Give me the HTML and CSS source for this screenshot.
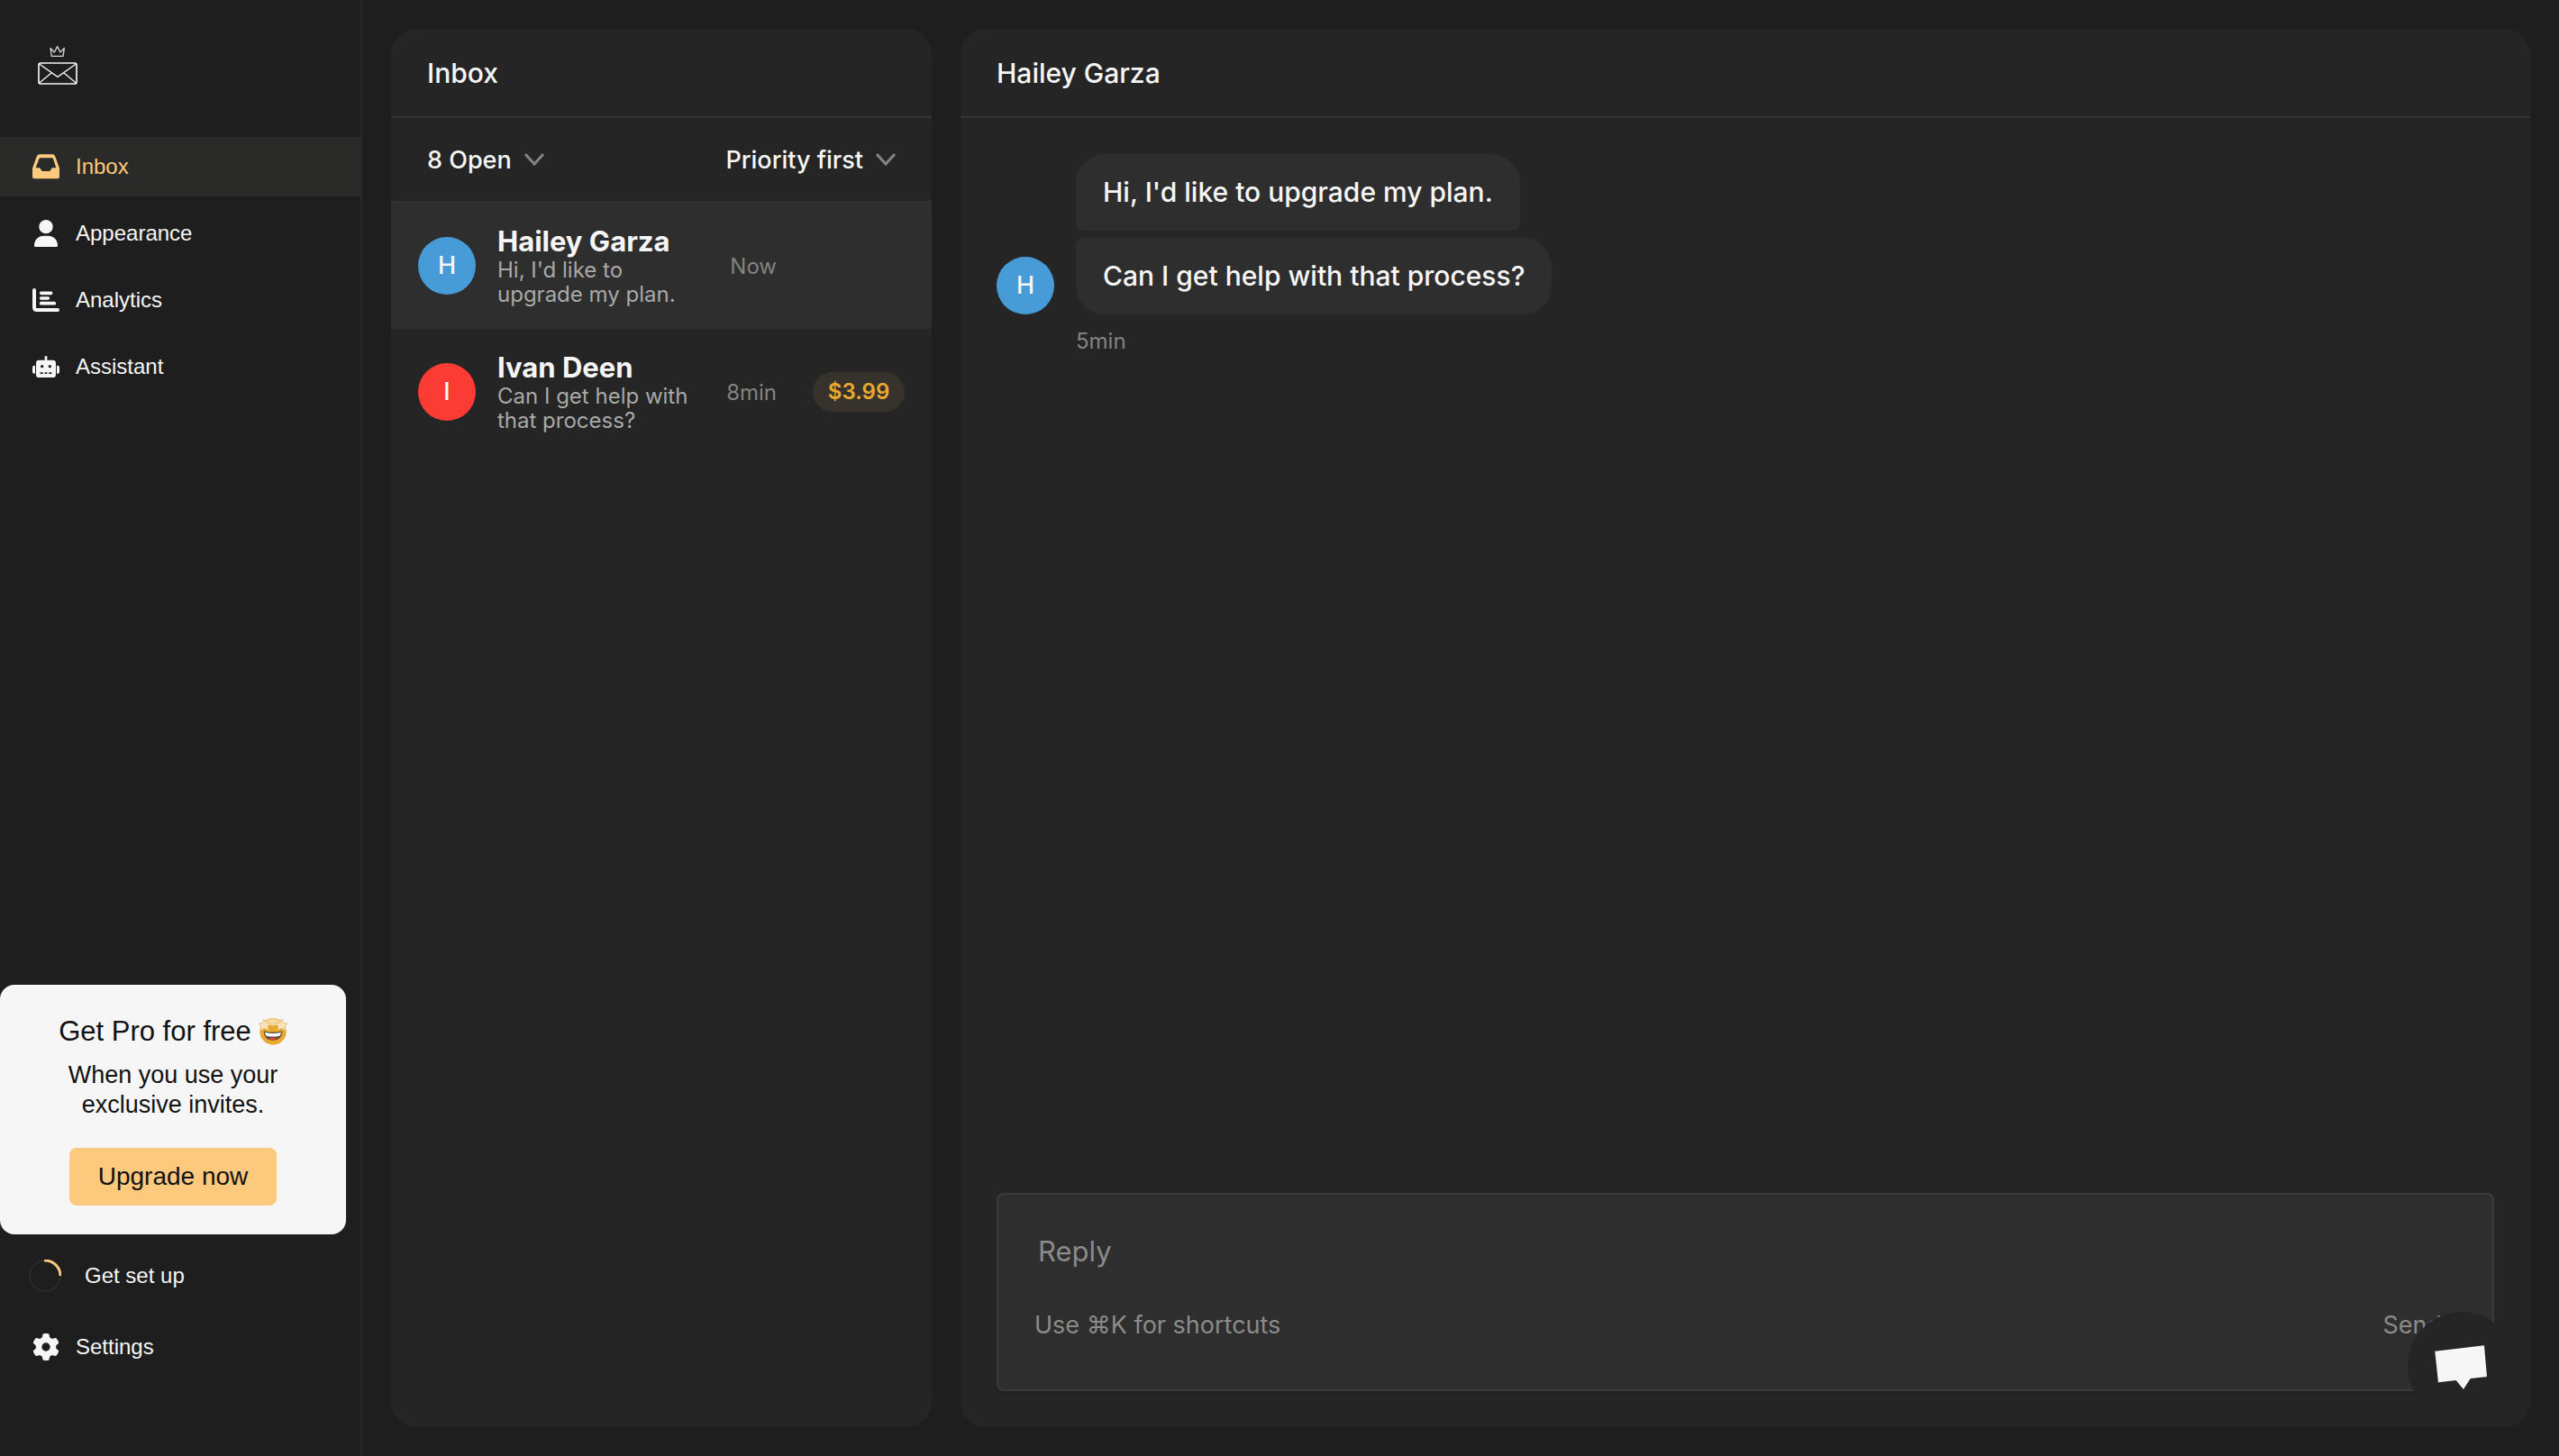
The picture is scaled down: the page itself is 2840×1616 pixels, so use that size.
FILE: index.html
```html
<!DOCTYPE html>
<html lang="en">
<head>
<meta charset="utf-8">
<title>Inbox</title>
<meta name="viewport" content="width=device-width, initial-scale=1">
<link rel="stylesheet" href="styles.css">
</head>
<body>
<div class="app">
  <aside class="sidebar">
    <a class="logo" href="#" aria-label="Home">
      <svg viewBox="0 0 132 132" width="44" height="44" fill="none" stroke="#f5f5f5" stroke-width="5" stroke-linejoin="round" stroke-linecap="round">
        <path d="M46 37 L42 10 L55 24 L65 5 L75 24 L88 10 L84 37 Z" stroke="#d4d4d4" stroke-width="4"/>
        <rect x="3" y="60" width="126" height="69" rx="6"/>
        <path d="M5 63 L66 106 L127 63 M5 126 L45 93 M127 126 L87 93" stroke-width="4"/>
      </svg>
    </a>
    <nav class="nav" aria-label="Main">
      <a class="nav-link active" href="#">
        <svg class="icon" viewBox="0 0 90 90" fill="currentColor" fill-rule="evenodd"><path d="M25 4H66Q74 4 76 11L90 50V77Q90 85 82 85H8Q0 85 0 77V50L14 11Q16 4 25 4ZM27 16Q23 16 22 19L11 49H23Q25 49 26 51L30 57Q32 60 35 60H56Q59 60 60 57L64 51Q65 49 67 49H79L69 19Q68 16 64 16Z"/></svg>
        Inbox
      </a>
      <a class="nav-link" href="#">
        <svg class="icon" viewBox="0 0 90 90" fill="currentColor"><circle cx="45" cy="23" r="23"/><path d="M6 86C6 66 20 53 38 53H52C70 53 84 66 84 86Q84 90 80 90H10Q6 90 6 86Z"/></svg>
        Appearance
      </a>
      <a class="nav-link" href="#">
        <svg class="icon" viewBox="0 0 90 90" fill="none" stroke="currentColor" stroke-linecap="round"><path stroke-width="12" d="M6 12V70Q6 78 14 78H84"/><path stroke-width="11" d="M29 22H62M29 39H52M29 56H73"/></svg>
        Analytics
      </a>
      <a class="nav-link" href="#">
        <svg class="icon" viewBox="0 0 90 90" fill="currentColor" fill-rule="evenodd"><rect x="41" y="9" width="8" height="18" rx="4"/><path d="M9 41V68H6Q0 68 0 62V47Q0 41 6 41ZM81 41H84Q90 41 90 47V62Q90 68 84 68H81Z"/><path d="M22 23H68Q78 23 78 33V71Q78 81 68 81H22Q12 81 12 71V33Q12 23 22 23ZM32 39a5 5 0 1 0 0 10a5 5 0 1 0 0-10ZM58 39a5 5 0 1 0 0 10a5 5 0 1 0 0-10ZM26 64V69H35V64ZM41 64V69H49V64ZM55 64V69H64V64Z"/></svg>
        Assistant
      </a>
    </nav>
    <section class="promo">
      <h2 class="promo-title">Get Pro for free
        <svg class="emoji" viewBox="0 0 96 90" role="img" aria-label="star-struck">
          <circle cx="48" cy="45" r="44" fill="#e9a92f"/>
          <ellipse cx="48" cy="14" rx="24" ry="11" fill="#fbd9a0"/>
          <path d="M17 43Q48 52 79 43Q78 74 48 74Q18 74 17 43Z" fill="#5b4a3a"/>
          <path d="M21 47Q48 55 75 47Q74 57 70 59Q48 64 26 59Q22 57 21 47Z" fill="#fff"/>
          <path d="M34 69Q48 62 62 69Q48 76 34 69Z" fill="#ee3f33"/>
          <path d="M18 3L25 16L41 17L31 27L34 41L21 34L7 41L9 27L0 18L13 16ZM78 3L71 16L55 17L65 27L62 41L75 34L89 41L87 27L96 18L83 16Z" fill="#fbe3b8" stroke="#d9b36a" stroke-width="2"/>
        </svg>
      </h2>
      <p class="promo-text">When you use your exclusive invites.</p>
      <button class="promo-button" type="button">Upgrade now</button>
    </section>
    <nav class="nav nav-bottom" aria-label="Account">
      <a class="nav-link setup" href="#">
        <svg class="ring" viewBox="0 0 36 36" fill="none" stroke-width="2"><circle cx="18" cy="18" r="17" stroke="#2a2a2a"/><path d="M17 1A17 17 0 0 1 35 18" stroke="#fcc97d" stroke-width="3"/></svg>
        Get set up
      </a>
      <a class="nav-link" href="#">
        <svg class="icon" viewBox="0 0 512 512" fill="currentColor"><path d="M495.900 166.600c3.200 8.700 .5 18.400-6.400 24.600l-43.300 39.400c1.100 8.300 1.700 16.800 1.700 25.400s-.6 17.100-1.700 25.400l43.300 39.400c6.900 6.200 9.600 15.900 6.400 24.600c-4.400 11.900-9.700 23.300-15.800 34.300l-4.700 8.100c-6.600 11-14 21.400-22.100 31.200c-5.900 7.200-15.700 9.600-24.500 6.800l-55.700-17.700c-13.400 10.300-28.200 18.900-44 25.400l-12.500 57.100c-2 9.100-9 16.300-18.200 17.800c-13.800 2.300-28 3.500-42.500 3.500s-28.700-1.200-42.500-3.500c-9.200-1.500-16.200-8.700-18.200-17.800l-12.500-57.100c-15.800-6.500-30.600-15.100-44-25.400L83.100 425.900c-8.800 2.800-18.600 .3-24.500-6.800c-8.100-9.800-15.500-20.200-22.100-31.200l-4.700-8.100c-6.100-11-11.400-22.400-15.800-34.300c-3.200-8.700-.5-18.400 6.400-24.600l43.300-39.400C64.600 273.100 64 264.600 64 256s.6-17.100 1.700-25.400L22.400 191.200c-6.900-6.200-9.600-15.900-6.400-24.600c4.400-11.900 9.700-23.300 15.800-34.300l4.700-8.100c6.600-11 14-21.400 22.100-31.200c5.900-7.200 15.700-9.600 24.500-6.800l55.700 17.700c13.400-10.300 28.200-18.900 44-25.400l12.500-57.100c2-9.100 9-16.300 18.200-17.800C227.300 1.200 241.500 0 256 0s28.700 1.200 42.500 3.500c9.200 1.500 16.200 8.700 18.200 17.800l12.500 57.100c15.800 6.500 30.600 15.100 44 25.400l55.700-17.700c8.800-2.800 18.600-.3 24.500 6.800c8.100 9.800 15.500 20.200 22.100 31.200l4.700 8.100c6.100 11 11.400 22.400 15.800 34.300zM256 336a80 80 0 1 0 0-160 80 80 0 1 0 0 160z"/></svg>
        Settings
      </a>
    </nav>
  </aside>

  <main class="main">
    <section class="panel list-panel">
      <header class="panel-header"><h1 class="panel-title">Inbox</h1></header>
      <div class="filters">
        <button class="filter" type="button">8 Open
          <svg class="chevron" viewBox="0 0 22 14" fill="none" stroke="#83837f" stroke-width="3"><path d="M1 1L11 12L21 1"/></svg>
        </button>
        <button class="filter" type="button">Priority first
          <svg class="chevron" viewBox="0 0 22 14" fill="none" stroke="#83837f" stroke-width="3"><path d="M1 1L11 12L21 1"/></svg>
        </button>
      </div>
      <a class="thread selected" href="#">
        <span class="avatar blue">H</span>
        <span class="thread-body">
          <strong class="thread-name">Hailey Garza</strong>
          <span class="thread-text">Hi, I'd like to upgrade my plan.</span>
        </span>
        <span class="thread-time">Now</span>
      </a>
      <a class="thread" href="#">
        <span class="avatar red">I</span>
        <span class="thread-body">
          <strong class="thread-name">Ivan Deen</strong>
          <span class="thread-text">Can I get help with that process?</span>
        </span>
        <span class="thread-time">8min</span>
        <span class="price">$3.99</span>
      </a>
    </section>

    <section class="panel chat-panel">
      <header class="panel-header"><h2 class="panel-title">Hailey Garza</h2></header>
      <div class="messages">
        <span class="avatar blue">H</span>
        <div class="bubbles">
          <p class="bubble first">Hi, I'd like to upgrade my plan.</p>
          <p class="bubble last">Can I get help with that process?</p>
        </div>
        <time class="message-time">5min</time>
      </div>
      <form class="composer">
        <input class="reply" type="text" placeholder="Reply" aria-label="Reply">
        <div class="composer-footer">
          <span>Use ⌘K for shortcuts</span>
          <button class="send" type="button">Send</button>
        </div>
      </form>
    </section>
  </main>
  <button class="launcher" type="button" aria-label="Open chat">
    <svg viewBox="0 0 120 120" width="120" height="120" fill="#f6f6f6"><path d="M30.300 43.700L85 37.300L88 72L69.700 74L62 86L53.700 76L34 78.300Z"/></svg>
  </button>
</div>
</body>
</html>
```
FILE: styles.css
```css
* { box-sizing: border-box; }

body {
  margin: 0;
  background: #1e1e1e;
  color: #f6f6f6;
  font-family: Inter, "Noto Sans", sans-serif;
}

h1, h2, p { margin: 0; font-weight: 400; }
a { color: inherit; text-decoration: none; }
button, input {
  margin: 0;
  padding: 0;
  border: 0;
  background: none;
  color: inherit;
  font: inherit;
}

.app { display: flex; min-height: 100vh; }

/* Sidebar */
.sidebar {
  display: flex;
  flex-direction: column;
  flex: 0 0 402px;
  border-right: 2px solid #292929;
  padding-bottom: 88px;
  font-family: "Liberation Sans", Arial, sans-serif;
}
.logo { display: flex; padding: 50px 42px 58px; }
.nav { display: flex; flex-direction: column; gap: 8px; }
.nav-bottom { gap: 13px; }
.nav-link {
  display: flex;
  align-items: center;
  gap: 18px;
  height: 66px;
  padding: 0 36px;
  font-size: 24px;
}
.nav-link.active { background: #2a2a29; color: #fcc97d; }
.icon { width: 30px; height: 30px; }
.setup { gap: 26px; padding-left: 32px; }
.ring { width: 36px; height: 36px; }

.promo {
  display: flex;
  flex-direction: column;
  align-items: center;
  margin: auto 16px 13px 0;
  padding: 32px;
  border-radius: 16px;
  background: #f6f6f6;
  color: #111;
  text-align: center;
}
.promo-title {
  display: flex;
  align-items: center;
  gap: 8px;
  font-size: 31px;
  line-height: 40px;
}
.emoji { width: 32px; height: 30px; }
.promo-text {
  max-width: 260px;
  margin: 12px 0 31px;
  font-size: 27px;
  line-height: 33px;
}
.promo-button {
  width: 230px;
  height: 64px;
  border-radius: 8px;
  background: #fcc97d;
  font-size: 28px;
}

/* Panels */
.main {
  display: flex;
  flex: 1;
  gap: 32px;
  min-width: 0;
  padding: 32px;
}
.panel {
  display: flex;
  flex-direction: column;
  border-radius: 28px;
  background: #252525;
}
.list-panel { flex: 0 0 600px; }
.chat-panel { flex: 1; min-width: 0; }
.panel-header {
  display: flex;
  align-items: center;
  height: 99px;
  padding: 0 40px;
  border-bottom: 2px solid #333;
}
.panel-title { font-size: 30px; font-weight: 500; }

.filters {
  display: flex;
  align-items: center;
  justify-content: space-between;
  height: 94px;
  padding: 0 40px;
  border-bottom: 2px solid #313131;
}
.filter {
  display: flex;
  align-items: center;
  gap: 14px;
  font-size: 27px;
  font-weight: 500;
}
.chevron { width: 22px; height: 14px; }

.thread {
  display: grid;
  grid-template-columns: 64px 1fr 108px 102px;
  align-items: center;
  height: 140px;
  padding: 0 30px;
}
.thread.selected { background: #2e2e2e; }
.thread-body { display: flex; flex-direction: column; padding: 0 24px; }
.thread-name { font-size: 31px; line-height: 36px; font-weight: 700; }
.thread-text { color: #a9a9a7; font-size: 24px; line-height: 27px; }
.thread-time {
  padding-right: 40px;
  color: #83837f;
  font-size: 24px;
  text-align: right;
}
.price {
  height: 44px;
  border-radius: 22px;
  background: #37332c;
  color: #e9a92f;
  font-size: 24px;
  font-weight: 600;
  line-height: 44px;
  text-align: center;
}
.avatar {
  width: 64px;
  height: 64px;
  border-radius: 50%;
  font-size: 27px;
  font-weight: 500;
  line-height: 64px;
  text-align: center;
}
.blue { background: #479bd7; }
.red { background: #fb3b34; }

/* Conversation */
.messages {
  display: grid;
  grid-template-columns: 64px 1fr;
  align-items: end;
  column-gap: 24px;
  row-gap: 16px;
  padding: 40px;
}
.bubbles {
  display: flex;
  flex-direction: column;
  align-items: flex-start;
  gap: 8px;
}
.bubble {
  padding: 22px 30px;
  background: #2e2e2e;
  font-size: 30px;
  font-weight: 500;
  line-height: 41px;
}
.bubble.first { border-radius: 32px 32px 8px 8px; }
.bubble.last { border-radius: 8px 32px 32px 32px; }
.message-time {
  grid-column: 2;
  color: #83837f;
  font-size: 24px;
  line-height: 28px;
}

.composer {
  display: flex;
  flex-direction: column;
  gap: 44px;
  height: 220px;
  margin: auto 40px 40px;
  padding: 40px;
  border: 2px solid #3b3b3b;
  border-radius: 8px;
  background: #2e2e2e;
  box-shadow: 0 4px 2px #222;
  color: #8b8b88;
}
.reply {
  height: 44px;
  padding-left: 4px;
  font-size: 31px;
}
.reply::placeholder { color: #8b8b88; opacity: 1; }
.composer-footer {
  display: flex;
  align-items: center;
  justify-content: space-between;
  height: 32px;
  font-size: 27px;
}
.send { padding-right: 16px; }

.launcher {
  position: fixed;
  right: 48px;
  bottom: 40px;
  width: 120px;
  height: 120px;
  border-radius: 50%;
  background: #252525;
}
.launcher svg { display: block; }
```
